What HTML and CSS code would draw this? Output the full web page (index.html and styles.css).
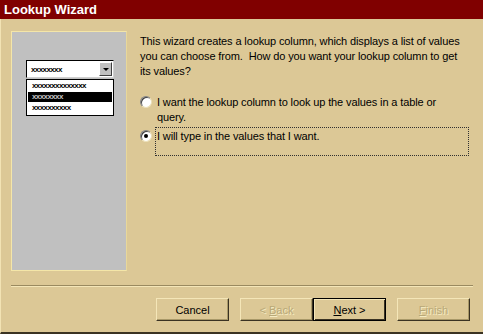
FILE: index.html
```html
<!DOCTYPE html>
<html lang="en">
<head>
    <meta charset="UTF-8">
    <title>Lookup Wizard</title>
    <link rel="stylesheet" href="styles.css">
</head>
<body>
    <div class="window">
        <div class="titlebar">Lookup Wizard</div>

        <div class="content">
            <!-- Illustration on the left -->
            <div class="picture">
                <div class="combo">
                    <span class="combo-text">xxxxxxxx</span>
                    <span class="combo-arrow"></span>
                </div>
                <div class="list">
                    <div class="list-item">xxxxxxxxxxxxxx</div>
                    <div class="list-item selected">xxxxxxxx</div>
                    <div class="list-item">xxxxxxxxxx</div>
                </div>
            </div>

            <!-- Question and choices -->
            <div class="body">
                <p class="intro">This wizard creates a lookup column, which displays a list of values<br>you can choose from.&nbsp; How do you want your lookup column to get<br>its values?</p>
                <div class="options">
                    <div class="option">
                        <span class="radio"></span>
                        <span class="option-text">I want the lookup column to look up the values in a table or<br>query.</span>
                    </div>
                    <div class="option">
                        <span class="radio checked"></span>
                        <span class="option-text focus">I will type in the values that I want.</span>
                    </div>
                </div>
            </div>
        </div>

        <div class="separator"></div>

        <div class="buttons">
            <button class="btn">Cancel</button>
            <div class="btn-pair">
                <button class="btn disabled">&lt; <u>B</u>ack</button>
                <button class="btn default"><u>N</u>ext &gt;</button>
            </div>
            <button class="btn disabled"><u>F</u>inish</button>
        </div>
    </div>
</body>
</html>
```

FILE: styles.css
```css
body {
    margin: 0;
    font-family: 'Liberation Sans', Arial, sans-serif;
    font-size: 11px;
    background-color: #dcc896;
}
.window {
    width: 483px;
    height: 334px;
    box-sizing: border-box;
    background-color: #dcc896;
    border-left: 1px solid #f2e3b4;
    border-bottom: 2px solid #3a3222;
    display: flex;
    flex-direction: column;
}
.titlebar {
    height: 19px;
    line-height: 19px;
    background-color: #800000;
    color: #ffffff;
    font-weight: bold;
    font-size: 13px;
    padding-left: 4px;
    margin-left: -1px;
}
.content {
    display: flex;
    padding: 12px 0 0 10px;
    height: 266px;
    box-sizing: border-box;
}
.picture {
    width: 116px;
    height: 240px;
    box-sizing: border-box;
    background-color: #c0c0c0;
    border: 1px solid #f4e6a8;
    border-right-color: #e8d89a;
    padding: 28px 0 0 14px;
}
.combo {
    width: 88px;
    height: 18px;
    box-sizing: border-box;
    background-color: #ffffff;
    border: 1px solid #000000;
    border-right-color: #d0d0d0;
    border-bottom-color: #d0d0d0;
    display: flex;
    align-items: center;
    justify-content: space-between;
}
.combo-text {
    font-size: 8px;
    letter-spacing: -0.6px;
    padding-left: 4px;
    font-weight: bold;
    color: #000000;
}
.combo-arrow {
    width: 13px;
    height: 14px;
    margin-right: 1px;
    box-sizing: border-box;
    background-color: #c0c0c0;
    border: 1px solid #ffffff;
    border-right-color: #404040;
    border-bottom-color: #404040;
    position: relative;
}
.combo-arrow::after {
    content: '';
    position: absolute;
    left: 3px;
    top: 5px;
    border-left: 3px solid transparent;
    border-right: 3px solid transparent;
    border-top: 3px solid #000000;
}
.list {
    width: 88px;
    margin-top: 1px;
    box-sizing: border-box;
    background-color: #ffffff;
    border: 1px solid #000000;
    padding: 1px 1px;
}
.list-item {
    height: 10px;
    line-height: 10px;
    font-size: 8px;
    font-weight: bold;
    letter-spacing: -0.6px;
    padding-left: 4px;
    color: #000000;
    margin-bottom: 1px;
}
.list-item.selected {
    background-color: #000000;
    color: #c0c0c0;
}
.body {
    margin-left: 13px;
    flex: 1;
    letter-spacing: -0.12px;
}
.intro {
    margin: 3px 0 0 0;
    line-height: 15px;
    color: #000000;
}
.options {
    margin-top: 16px;
    display: flex;
    flex-direction: column;
    gap: 4px;
}
.option {
    display: flex;
    align-items: flex-start;
}
.radio {
    width: 12px;
    height: 12px;
    box-sizing: border-box;
    border-radius: 50%;
    background-color: #ffffff;
    border: 1px solid #808080;
    border-right-color: #ece0b8;
    border-bottom-color: #ece0b8;
    box-shadow: inset 1px 1px 0 #404040;
    margin: 1px 5px 0 0;
    flex-shrink: 0;
    position: relative;
}
.radio.checked::after {
    content: '';
    position: absolute;
    left: 3px;
    top: 3px;
    width: 4px;
    height: 4px;
    border-radius: 50%;
    background-color: #000000;
}
.option-text {
    line-height: 15px;
}
.option-text.focus {
    display: block;
    width: 314px;
    height: 29px;
    box-sizing: border-box;
    border: 1px dotted #303030;
    margin: -2px 0 0 -2px;
    padding: 1px 0 0 1px;
}
.separator {
    margin: 0 10px 0 10px;
    height: 1px;
    background-color: #9a8a60;
    border-bottom: 1px solid #f4e6b8;
}
.buttons {
    display: flex;
    padding: 11px 0 0 155px;
}
.btn-pair {
    display: flex;
    margin-left: 11px;
}
.btn {
    width: 73px;
    height: 23px;
    box-sizing: border-box;
    font-family: 'Liberation Sans', Arial, sans-serif;
    font-size: 11px;
    background-color: #dcc896;
    color: #000000;
    border: 1px solid #f4e6b8;
    border-right-color: #3a3222;
    border-bottom-color: #3a3222;
    box-shadow: inset -1px -1px 0 #a89868;
    padding: 0;
}
.btn + .btn-pair + .btn {
    margin-left: 11px;
}
.btn.default {
    border: 1px solid #000000;
    box-shadow: inset 1px 1px 0 #f4e6b8, inset -1px -1px 0 #3a3222;
}
.btn.disabled {
    color: #b8a878;
    text-shadow: 1px 1px 0 #f6ecc4;
}
```
